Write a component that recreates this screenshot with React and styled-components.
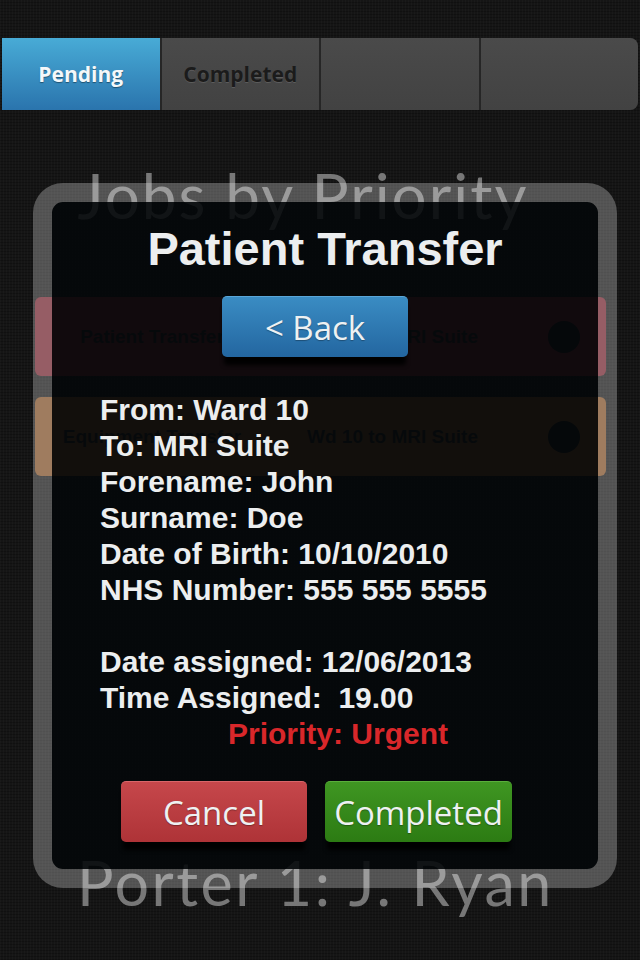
import React from 'react';
import styled, { createGlobalStyle } from 'styled-components';

const COLOR = {
  PAGE: '#151515',
  TEXT: '#eceeef',
  FAINT: '#777777',
  URGENT: '#d9272a',
};

const GlobalStyle = createGlobalStyle`
  html, body {
    margin: 0;
    padding: 0;
    background: ${COLOR.PAGE};
  }
  body {
    font-family: 'Liberation Sans', Arial, sans-serif;
  }
`;

const Page = styled.div`
  position: relative;
  width: 640px;
  height: 960px;
  overflow: hidden;
  display: flex;
  flex-direction: column;
  background-color: ${COLOR.PAGE};
  background-image: repeating-linear-gradient(
      90deg,
      rgba(255, 255, 255, 0.018) 0 1px,
      transparent 1px 3px
    ),
    repeating-linear-gradient(0deg, rgba(0, 0, 0, 0.25) 0 1px, transparent 1px 3px);
`;

const TabBar = styled.nav`
  display: flex;
  height: 72px;
  margin: 38px 2px 0;
  gap: 2px;
  background: #262626;
  border-radius: 0 8px 8px 0;
`;

const Tab = styled.div`
  flex: 1;
  display: flex;
  align-items: center;
  justify-content: center;
  font-family: 'Open Sans', sans-serif;
  font-weight: 700;
  font-size: 21px;
  color: ${p => (p.$active ? '#f4f8fa' : '#1b1b1b')};
  text-shadow: ${p => (p.$active ? '0 1px 1px rgba(0,0,0,0.4)' : '0 1px 0 rgba(255,255,255,0.12)')};
  background: ${p =>
    p.$active ? 'linear-gradient(#48abd6, #2a74ad)' : 'linear-gradient(#4a4a4a, #424242)'};
  &:last-child {
    border-radius: 0 8px 8px 0;
  }
`;

const Heading = styled.h1`
  margin: 52px 0 0;
  text-align: center;
  padding-right: 34px;
  font-family: Lato, sans-serif;
  font-weight: 400;
  font-size: 62px;
  line-height: 66px;
  letter-spacing: 2px;
  color: ${COLOR.FAINT};
`;

const JobList = styled.div`
  display: flex;
  flex-direction: column;
  gap: 21px;
  margin: 69px 34px 0 35px;
`;

const JobRow = styled.div`
  display: grid;
  grid-template-columns: 234px 1fr 58px;
  align-items: center;
  height: 79px;
  border-radius: 6px;
  background: ${p => p.$tone};
  font-weight: 700;
  font-size: 19px;
  color: #1c1c1c;
`;

const JobType = styled.span`
  text-align: center;
`;

const JobRoute = styled.span`
  padding-left: 38px;
`;

const Status = styled.span`
  width: 32px;
  height: 32px;
  border-radius: 50%;
  background: #121212;
`;

const Footer = styled.div`
  margin-top: auto;
  padding: 0 0 44px 77px;
  font-family: Lato, sans-serif;
  font-weight: 400;
  font-size: 61px;
  line-height: 66px;
  letter-spacing: 2.5px;
  color: ${COLOR.FAINT};
`;

/* dialog sitting over the job list */
const Modal = styled.div`
  position: absolute;
  left: 33px;
  top: 183px;
  width: 584px;
  height: 705px;
  box-sizing: border-box;
  border: 19px solid rgba(255, 255, 255, 0.27);
  border-radius: 30px;
  background: rgba(3, 7, 9, 0.88);
  background-clip: padding-box;
  display: flex;
  flex-direction: column;
  color: ${COLOR.TEXT};
`;

const Title = styled.h2`
  margin: 20px 0 0;
  text-align: center;
  font-size: 47px;
  line-height: 54px;
  font-weight: 700;
`;

const Button = styled.button`
  width: ${p => p.$width || 186}px;
  height: 61px;
  padding: 0;
  border: none;
  border-top: 1px solid ${p => p.$edge};
  border-radius: 5px;
  background: ${p => p.$bg};
  box-shadow: 0 10px 4px -2px rgba(0, 0, 0, 0.95);
  font-family: 'Open Sans', sans-serif;
  font-size: 33px;
  color: #eef1f2;
  text-shadow: 0 1px 1px rgba(0, 0, 0, 0.3);
`;

const BackButton = styled(Button)`
  margin: 20px 0 0 170px;
`;

const Details = styled.div`
  margin-top: 35px;
  padding-left: 48px;
  font-size: 30px;
  line-height: 36px;
  font-weight: 700;
  white-space: pre;
`;

const Line = styled.div`
  min-height: 36px;
`;

const Priority = styled.div`
  padding-left: 128px;
  color: ${COLOR.URGENT};
`;

const Actions = styled.div`
  display: flex;
  gap: 18px;
  margin: 29px 0 0 69px;
`;

const jobs = [
  { type: 'Patient Transfer', route: 'Wd 10 to MRI Suite', tone: 'rgb(112, 34, 44)' },
  { type: 'Equipment Transfer', route: 'Wd 10 to MRI Suite', tone: 'rgb(124, 76, 36)' },
];

const details = [
  'From: Ward 10',
  'To: MRI Suite',
  'Forename: John',
  'Surname: Doe',
  'Date of Birth: 10/10/2010',
  'NHS Number: 555 555 5555',
  '',
  'Date assigned: 12/06/2013',
  'Time Assigned:  19.00',
];

export default function App() {
  return (
    <Page>
      <GlobalStyle />
      <TabBar>
        <Tab $active>Pending</Tab>
        <Tab>Completed</Tab>
        <Tab />
        <Tab />
      </TabBar>

      <Heading>Jobs by Priority</Heading>

      <JobList>
        {jobs.map(job => (
          <JobRow key={job.type} $tone={job.tone}>
            <JobType>{job.type}</JobType>
            <JobRoute>{job.route}</JobRoute>
            <Status />
          </JobRow>
        ))}
      </JobList>

      <Footer>Porter 1: J. Ryan</Footer>

      <Modal>
        <Title>Patient Transfer</Title>
        <BackButton $bg="linear-gradient(#3a8cc3, #2366a0)" $edge="#5aa6d8">
          &lt; Back
        </BackButton>
        <Details>
          {details.map((text, i) => (
            <Line key={i}>{text}</Line>
          ))}
          <Priority>Priority: Urgent</Priority>
        </Details>
        <Actions>
          <Button $bg="linear-gradient(#c6474b, #ae3337)" $edge="#d8666a">
            Cancel
          </Button>
          <Button $width={187} $bg="linear-gradient(#3f9622, #2c7b13)" $edge="#5aae3c">
            Completed
          </Button>
        </Actions>
      </Modal>
    </Page>
  );
}
